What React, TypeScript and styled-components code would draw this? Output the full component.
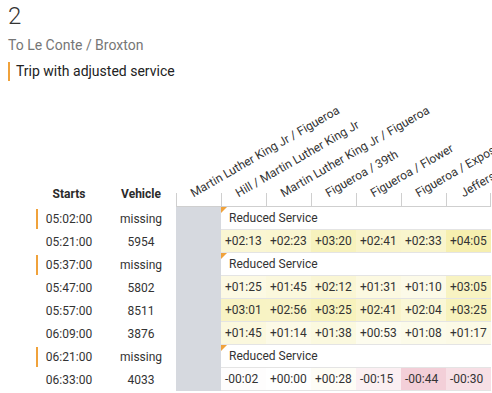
import React from 'react';
import styled, { createGlobalStyle } from 'styled-components';

const orange = '#f0a23b';

const GlobalStyle = createGlobalStyle`
  html, body {
    margin: 0;
    padding: 0;
    background: #fff;
    overflow: hidden;
  }
  body {
    font-family: Roboto, "Liberation Sans", sans-serif;
    color: #333;
  }
`;

const Page = styled.div`
  padding: 0 8px;
  width: 476px;
  overflow: hidden;
`;

const Title = styled.h1`
  margin: 2px 0 0;
  font-size: 24px;
  font-weight: 300;
  line-height: 28px;
  color: #333;
`;

const Subtitle = styled.div`
  margin-top: 5px;
  font-size: 14px;
  line-height: 20px;
  color: #767676;
`;

const Notice = styled.div`
  margin-top: 7px;
  padding-left: 6px;
  border-left: 2px solid ${orange};
  font-size: 14px;
  line-height: 19px;
  color: #222;
`;

const Table = styled.table`
  margin: 15px 0 0 28px;
  border-collapse: separate;
  border-spacing: 0;
  table-layout: fixed;
  width: 455px;
  font-size: 12px;
`;

const ColHead = styled.th<{ $w: number; $pr?: number }>`
  width: ${(p) => p.$w}px;
  box-sizing: border-box;
  padding: 0 ${(p) => p.$pr ?? 0}px 6px 0;
  vertical-align: bottom;
  text-align: center;
  font-weight: 700;
  line-height: 14px;
  color: #2b2b2b;
`;

const StopHead = styled.th`
  position: relative;
  width: 45px;
  height: 111px;
  box-sizing: border-box;
  padding: 0;
  vertical-align: bottom;
  border-bottom: 1px solid #cfcfcf;
`;

const Tick = styled.div<{ $last?: boolean }>`
  height: 13px;
  border-left: 1px solid #cfcfcf;
  border-right: ${(p) => (p.$last ? '1px solid #cfcfcf' : 'none')};
`;

const StopLabel = styled.span`
  position: absolute;
  left: 19px;
  bottom: 6px;
  white-space: nowrap;
  font-weight: 400;
  line-height: 14px;
  color: #333;
  transform-origin: 0 100%;
  transform: rotate(-30deg);
`;

const StartCell = styled.td<{ $missing?: boolean }>`
  height: 22px;
  padding: 0 4px 0 0;
  text-align: center;
  white-space: nowrap;
  background: ${(p) =>
    p.$missing ? `linear-gradient(${orange}, ${orange}) left center / 2px 20px no-repeat` : 'none'};
`;

const VehicleCell = styled.td`
  padding: 0;
  text-align: center;
  white-space: nowrap;
`;

const GapCell = styled.td`
  padding: 0;
  background: #d6d9df;
`;

const ValueCell = styled.td<{ $bg: string }>`
  height: 22px;
  padding: 0 0 0 4px;
  white-space: nowrap;
  background: ${(p) => p.$bg};
  border-bottom: 1px solid #e4e4e4;
`;

const ReducedCell = styled.td`
  position: relative;
  height: 22px;
  padding: 0 0 0 8px;
  white-space: nowrap;
  background: #fff;
  border-bottom: 1px solid #e4e4e4;

  &::before {
    content: '';
    position: absolute;
    top: 0;
    left: 0;
    border-style: solid;
    border-width: 6px 6px 0 0;
    border-color: ${orange} transparent transparent transparent;
  }
`;

const stops = [
  'Martin Luther King Jr / Figueroa',
  'Hill / Martin Luther King Jr',
  'Martin Luther King Jr / Figueroa',
  'Figueroa / 39th',
  'Figueroa / Flower',
  'Figueroa / Exposition',
  'Jefferson / Figueroa',
];

type Trip = { start: string; vehicle: string; deltas?: string[] };

const trips: Trip[] = [
  { start: '05:02:00', vehicle: 'missing' },
  { start: '05:21:00', vehicle: '5954', deltas: ['+02:13', '+02:23', '+03:20', '+02:41', '+02:33', '+04:05'] },
  { start: '05:37:00', vehicle: 'missing' },
  { start: '05:47:00', vehicle: '5802', deltas: ['+01:25', '+01:45', '+02:12', '+01:31', '+01:10', '+03:05'] },
  { start: '05:57:00', vehicle: '8511', deltas: ['+03:01', '+02:56', '+03:25', '+02:41', '+02:04', '+03:25'] },
  { start: '06:09:00', vehicle: '3876', deltas: ['+01:45', '+01:14', '+01:38', '+00:53', '+01:08', '+01:17'] },
  { start: '06:21:00', vehicle: 'missing' },
  { start: '06:33:00', vehicle: '4033', deltas: ['-00:02', '+00:00', '+00:28', '-00:15', '-00:44', '-00:30'] },
];

// late = yellow, early = pink, stronger the further off schedule
const cellColor = (delta: string) => {
  const [m, s] = delta.slice(1).split(':').map(Number);
  const secs = m * 60 + s;
  const mix = (to: number[], t: number) =>
    `rgb(${to.map((c) => Math.round(255 + (c - 255) * t)).join(',')})`;
  if (delta[0] === '-') return mix([238, 190, 202], Math.min(secs / 60, 1));
  return mix([244, 236, 160], Math.min(secs / 290, 1));
};

export default function App() {
  return (
    <Page>
      <GlobalStyle />
      <Title>2</Title>
      <Subtitle>To Le Conte / Broxton</Subtitle>
      <Notice>Trip with adjusted service</Notice>
      <Table>
        <thead>
          <tr>
            <ColHead $w={70} $pr={4}>Starts</ColHead>
            <ColHead $w={70}>Vehicle</ColHead>
            {stops.map((stop, i) => (
              <StopHead key={i}>
                <StopLabel>{stop}</StopLabel>
                <Tick $last={i === stops.length - 1} />
              </StopHead>
            ))}
          </tr>
        </thead>
        <tbody>
          {trips.map((trip) => (
            <tr key={trip.start}>
              <StartCell $missing={!trip.deltas}>{trip.start}</StartCell>
              <VehicleCell>{trip.vehicle}</VehicleCell>
              <GapCell />
              {trip.deltas ? (
                trip.deltas.map((d, i) => (
                  <ValueCell key={i} $bg={cellColor(d)}>
                    {d}
                  </ValueCell>
                ))
              ) : (
                <ReducedCell colSpan={6}>Reduced Service</ReducedCell>
              )}
            </tr>
          ))}
        </tbody>
      </Table>
    </Page>
  );
}
